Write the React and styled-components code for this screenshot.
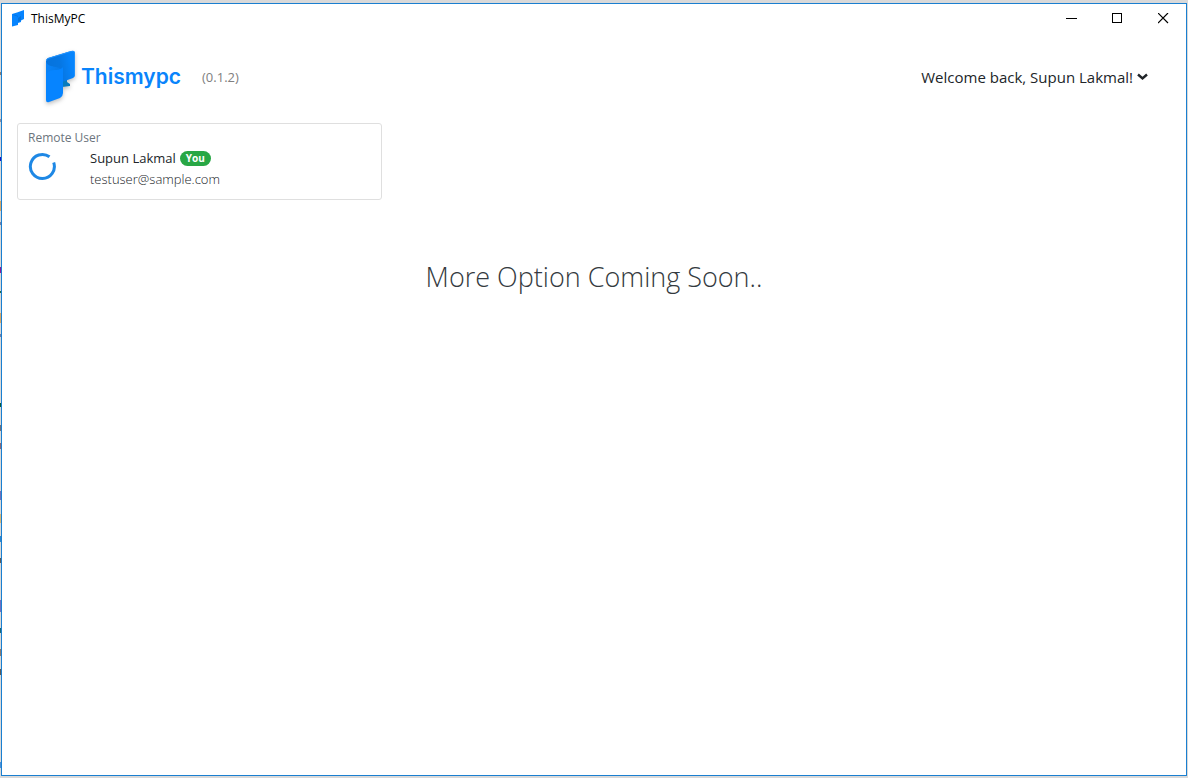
import React from "react";
import styled, { createGlobalStyle } from "styled-components";

const GlobalStyle = createGlobalStyle`
  *, *::before, *::after { box-sizing: border-box; }
  body {
    margin: 0;
    background: #d9d9d9;
    color: #212529;
    font-family: "Open Sans", "Noto Sans", sans-serif;
  }
  button { font: inherit; color: inherit; background: none; border: 0; padding: 0; }
  h1, h2, p { margin: 0; }
`;

/* Slivers of other windows that show at the left edge of the desktop. */
const slivers = [
  [72, 3, "#8a7a70"],
  [119, 3, "#8c8ca0"],
  [157, 4, "#1414c8"],
  [201, 10, "#d8a868"],
  [222, 3, "#6f7fa8"],
  [267, 6, "#8a1a9a"],
  [291, 2, "#1c6a4a"],
  [313, 10, "#d8a868"],
  [334, 3, "#6f7fa8"],
  [403, 4, "#0a5a3a"],
  [425, 6, "#70707a"],
  [443, 6, "#8a6a78"],
  [491, 9, "#7070b8"],
  [514, 9, "#d8b878"],
  [536, 6, "#2f86cc"],
  [558, 5, "#5a5a5a"],
  [600, 12, "#7070c0"],
  [628, 5, "#186878"],
  [649, 7, "#8a7a70"],
  [669, 6, "#5a5a5a"],
  [762, 6, "#4a90d8"],
];

const sliverStops = slivers
  .map(([y, h, c]) => `transparent ${y}px, ${c} ${y}px, ${c} ${y + h}px, transparent ${y + h}px`)
  .join(", ");

const Desktop = styled.div`
  display: flex;
  min-height: 100vh;
  padding: 3px 1px 2px;
  background: linear-gradient(${sliverStops}) left top / 1px 100% no-repeat;
`;

const Window = styled.div`
  flex: 1;
  background: #fff;
  border: 1px solid #1a7fd0;
`;

const TitleBar = styled.header`
  display: flex;
  align-items: center;
  height: 29px;
  padding-left: 9px;
`;

const AppTitle = styled.span`
  flex: 1;
  margin-left: 5px;
  color: #000;
  font-size: 12px;
  line-height: 16px;
`;

const CaptionButton = styled.button`
  display: flex;
  align-items: center;
  justify-content: center;
  width: 46px;
  height: 29px;
  color: #000;
`;

const Navbar = styled.nav`
  display: flex;
  align-items: center;
  justify-content: space-between;
  height: 88px;
  padding: 0 38px;
`;

const Brand = styled.a`
  display: flex;
  align-items: center;
  color: #0a84fb;
  text-decoration: none;
`;

const BrandName = styled.span`
  margin-left: 6px;
  font-family: Inter, sans-serif;
  font-size: 21px;
  font-weight: 600;
  line-height: 28px;
`;

const Version = styled.span`
  margin-left: 21px;
  color: #808080;
  font-size: 13px;
  line-height: 20px;
`;

const UserMenu = styled.button`
  display: flex;
  align-items: center;
  gap: 4px;
  font-size: 15px;
  line-height: 24px;
`;

const Main = styled.main`
  padding: 2px 15px;
`;

const Card = styled.section`
  max-width: 365px;
  height: 77px;
  padding: 4px 10px;
  border: 1px solid #dfdfdf;
  border-radius: 3px;
`;

const CardTitle = styled.h2`
  color: #6c757d;
  font-size: 12px;
  font-weight: 400;
  line-height: 20px;
`;

const UserRow = styled.div`
  display: flex;
  gap: 33px;
`;

const UserName = styled.p`
  display: flex;
  align-items: center;
  gap: 4px;
  font-size: 13px;
  line-height: 20px;
`;

const Badge = styled.span`
  padding: 0 6px;
  border-radius: 8px;
  background: #28a745;
  color: #fff;
  font-size: 10px;
  font-weight: 700;
  line-height: 15px;
`;

const Email = styled.p`
  font-size: 13px;
  font-weight: 300;
  line-height: 22px;
`;

const Notice = styled.h1`
  margin-top: 56px;
  color: #343a40;
  font-size: 27px;
  font-weight: 300;
  line-height: 42px;
  text-align: center;
`;

const BrandMark = styled.svg`
  display: block;
  overflow: visible;
  filter: drop-shadow(0 2px 2px rgba(0, 0, 0, 0.25));
`;

function LogoMark() {
  return (
    <BrandMark width="35" height="58" viewBox="0 0 35 58" aria-hidden="true">
      <defs>
        <linearGradient id="mark-back" x1="0" y1="0.4" x2="1" y2="0.2">
          <stop offset="0" stopColor="#0673dc" />
          <stop offset="0.45" stopColor="#0676e2" />
          <stop offset="0.85" stopColor="#0684fc" />
        </linearGradient>
        <linearGradient id="mark-fold" x1="0" y1="0" x2="1" y2="0.3">
          <stop offset="0" stopColor="#0a85fb" />
          <stop offset="1" stopColor="#0678e6" />
        </linearGradient>
      </defs>
      <path d="M22 33 L27 31 L27 34 L30 36 V38 L22 39Z" fill="#087bbd" />
      <path d="M6 13 Q6 11 8 10 L31 3 Q35 2 35 5 V27 Q35 29 33 30 L22 34 L6 26Z" fill="url(#mark-back)" />
      <path d="M6.500 13 Q6.500 11 8 10.500 L31 3.500 Q34.500 2.500 34.500 5 V27" fill="none" stroke="#1e92ff" />
      <path d="M6 13 C7 18 11 18 16 19 Q22 20 22.500 24 L6 32Z" fill="url(#mark-fold)" />
      <path
        d="M6 28 C6 23 11 22 16 22 Q22 21 23 19 V45 Q23 48 20 50 L9 54 Q6 55 6 52Z"
        fill="#0684ff"
      />
    </BrandMark>
  );
}

export default function App() {
  return (
    <>
      <GlobalStyle />
      <Desktop>
        <Window>
          <TitleBar>
            <svg width="15" height="17" viewBox="0 0 15 17" aria-hidden="true">
              <path d="M1 4L6 2.500L13 0V9L10 10.500V12L7 13V15L1 16.500Z" fill="#0684ff" />
              <path d="M2 4C4 7 7 5 7 8L10 6V10L7 12V6Z" fill="#0673dc" />
            </svg>
            <AppTitle>ThisMyPC</AppTitle>
            <CaptionButton aria-label="Minimize">
              <svg width="11" height="11" shapeRendering="crispEdges">
                <path d="M0 5.500H11" stroke="currentColor" />
              </svg>
            </CaptionButton>
            <CaptionButton aria-label="Maximize">
              <svg width="11" height="11" shapeRendering="crispEdges">
                <rect x="0.500" y="0.500" width="9" height="9" fill="none" stroke="currentColor" />
              </svg>
            </CaptionButton>
            <CaptionButton aria-label="Close">
              <svg width="11" height="11">
                <path d="M0 0L10 10M10 0L0 10" stroke="currentColor" strokeWidth="1.200" />
              </svg>
            </CaptionButton>
          </TitleBar>
          <Navbar>
            <Brand href="#">
              <LogoMark />
              <BrandName>Thismypc</BrandName>
              <Version>(0.1.2)</Version>
            </Brand>
            <UserMenu>
              Welcome back, Supun Lakmal!
              <svg width="11" height="8" viewBox="0 0 11 8" aria-hidden="true">
                <path d="M1 1.500L5.500 5.500L10 1.500" fill="none" stroke="currentColor" strokeWidth="2.400" />
              </svg>
            </UserMenu>
          </Navbar>
          <Main>
            <Card>
              <CardTitle>Remote User</CardTitle>
              <UserRow>
                <svg width="29" height="36" viewBox="0 0 29 36" role="img" aria-label="Loading">
                  <path
                    d="M21.500 8.800A12 12 0 1 0 25.700 14.500"
                    fill="none"
                    stroke="#1e88e5"
                    strokeWidth="3"
                  />
                </svg>
                <div>
                  <UserName>
                    Supun Lakmal <Badge>You</Badge>
                  </UserName>
                  <Email>testuser@sample.com</Email>
                </div>
              </UserRow>
            </Card>
            <Notice>More Option Coming Soon..</Notice>
          </Main>
        </Window>
      </Desktop>
    </>
  );
}
